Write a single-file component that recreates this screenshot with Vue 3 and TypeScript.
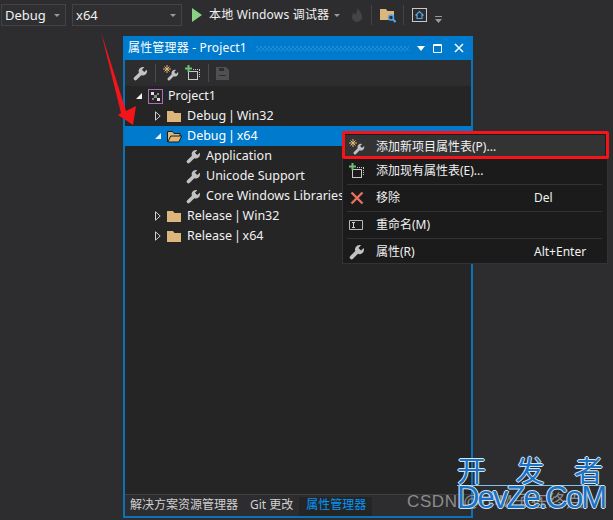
<script setup lang="ts">
interface Row { label: string; level: string; kind: 'project' | 'folder' | 'open' | 'sheet'; arrow: 'open' | 'closed' | 'none'; selected?: boolean }
const rows: Row[] = [
  { label: 'Project1', level: 'l0', kind: 'project', arrow: 'open' },
  { label: 'Debug | Win32', level: 'l1', kind: 'folder', arrow: 'closed' },
  { label: 'Debug | x64', level: 'l1', kind: 'open', arrow: 'open', selected: true },
  { label: 'Application', level: 'l2', kind: 'sheet', arrow: 'none' },
  { label: 'Unicode Support', level: 'l2', kind: 'sheet', arrow: 'none' },
  { label: 'Core Windows Libraries', level: 'l2', kind: 'sheet', arrow: 'none' },
  { label: 'Release | Win32', level: 'l1', kind: 'folder', arrow: 'closed' },
  { label: 'Release | x64', level: 'l1', kind: 'folder', arrow: 'closed' },
]
const wrench = 'M10.5 1a4.5 4.5 0 0 0-4.2 6.1L1.3 12A1.9 1.9 0 0 0 4 14.7l4.9-4.9A4.5 4.5 0 0 0 15 5.5a4.5 4.5 0 0 0-.3-1.6L12 6.5 9.5 4l2.6-2.7A4.5 4.5 0 0 0 10.5 1z'
</script>

<template>
  <div class="screen">
    <header class="topbar">
      <div class="combo debug"><span>Debug</span><i class="caret"></i></div>
      <div class="combo x64"><span>x64</span><i class="caret"></i></div>
      <svg class="play" width="10" height="14" viewBox="0 0 10 14"><path d="M0 0l10 7-10 7z" fill="#89d185" /></svg>
      <span class="runlabel">本地 Windows 调试器</span>
      <i class="caret runcaret"></i>
      <svg class="flame" width="12" height="16" viewBox="0 0 12 16"><path d="M6 0c1 3 5 5 5 10a5 5 0 0 1-10 0c0-2 1-4 2-5 0 2 1 2 1 3 1-2 3-4 2-8z" fill="#444446" /></svg>
      <i class="sep"></i>
      <svg class="ticon" width="16" height="16" viewBox="0 0 16 16">
        <path d="M0 2h6l1.500 2H14v9H0z" fill="#dcb67a" />
        <circle cx="11" cy="10.500" r="2.500" fill="#2d2d30" stroke="#4fa6e8" stroke-width="1.500" />
        <path d="M12.800 12.300l2.700 2.700" stroke="#4fa6e8" stroke-width="2" />
      </svg>
      <i class="sep"></i>
      <svg class="ticon" width="15" height="14" viewBox="0 0 15 14">
        <rect x=".5" y=".5" width="14" height="13" fill="none" stroke="#c8c8c8" />
        <path d="M3.500 7.500L7.500 3.500l4 4M5 6.500v4h5v-4" fill="none" stroke="#4fa6e8" stroke-width="1.200" />
      </svg>
      <svg class="more" width="7" height="7" viewBox="0 0 7 7"><path d="M0 0h7v1H0zM0 3h7L3.500 7z" fill="#9a9a9a" /></svg>
    </header>

    <section class="window">
      <div class="titlebar">
        <span class="title">属性管理器 - Project1</span>
        <i class="grip"></i>
        <svg width="8" height="5" viewBox="0 0 8 5"><path d="M0 0h8L4 5z" fill="#fff" /></svg>
        <svg class="max" width="10" height="9" viewBox="0 0 10 9"><path d="M.5.500h8v8h-8zM.5 1.500h8" fill="none" stroke="#fff" /></svg>
        <svg class="close" width="10" height="10" viewBox="0 0 10 10"><path d="M1 1l8 8M9 1L1 9" stroke="#fff" stroke-width="1.500" /></svg>
      </div>

      <div class="tools">
        <svg width="15" height="15" viewBox="0 0 16 16"><path :d="wrench" fill="#c2c2c2" /></svg>
        <i class="toolsep"></i>
        <svg width="16" height="16" viewBox="0 0 16 16">
          <path :d="wrench" fill="#c2c2c2" transform="translate(4 4) scale(.75)" />
          <path d="M4 0v8M0 4h8M1.500 1.500l5 5M6.500 1.500l-5 5" stroke="#e8b66e" stroke-width="1" />
        </svg>
        <svg class="addsheet" width="16" height="16" viewBox="0 0 16 16">
          <rect x="3.500" y="6.500" width="9" height="8" fill="none" stroke="#c8c8c8" />
          <path d="M8 4.500h7M14.500 5v8" stroke="#c8c8c8" stroke-dasharray="1 1" />
          <path d="M3.500 0v7M0 3.500h7" stroke="#6fbf73" stroke-width="2" />
        </svg>
        <i class="toolsep"></i>
        <svg width="13" height="13" viewBox="0 0 13 13"><path d="M0 0h10l3 3v10H0zM3 1v3h5V1zM3 8v1h7V8z" fill="#505052" fill-rule="evenodd" /></svg>
      </div>

      <div class="tree">
        <div v-for="row in rows" :key="row.label" class="row" :class="[row.level, { selected: row.selected }]">
          <span class="twisty">
            <svg v-if="row.arrow === 'open'" width="6" height="6" viewBox="0 0 6 6"><path d="M6 0v6H0z" fill="#f1f1f1" /></svg>
            <svg v-else-if="row.arrow === 'closed'" width="6" height="10" viewBox="0 0 6 10"><path d="M.5.800l4.700 4.200-4.700 4.200z" fill="none" stroke="#d0d0d0" /></svg>
          </span>
          <svg v-if="row.kind === 'project'" class="ricon" width="15" height="15" viewBox="0 0 15 15">
            <rect x=".5" y=".5" width="14" height="14" fill="#252526" stroke="#b06cb8" />
            <path d="M3 3h3v3H3zM9 9h3v3H9z" fill="#e0e0e0" /><path d="M6 6h3v3H6zM9 4h2v2H9zM4 9h2v2H4z" fill="#8a8a8a" />
          </svg>
          <svg v-else-if="row.kind === 'folder'" class="ricon" width="15" height="13" viewBox="0 0 15 13"><path d="M0 1h6l1.500 2H14v9H0z" fill="#dcb67a" /></svg>
          <svg v-else-if="row.kind === 'open'" class="ricon" width="15" height="13" viewBox="0 0 15 13">
            <path d="M.5 12V1.500h5l1.500 2h6V6" fill="#dcb67a" stroke="#1b1b1c" />
            <path d="M.8 12l3-6h11l-3 6z" fill="#dcb67a" stroke="#1b1b1c" />
          </svg>
          <svg v-else class="ricon" width="15" height="15" viewBox="0 0 16 16"><path :d="wrench" fill="#c2c2c2" /></svg>
          <span class="rowlabel">{{ row.label }}</span>
        </div>
      </div>

      <footer class="tabs">
        <span class="tab">解决方案资源管理器</span>
        <span class="tab">Git 更改</span>
        <span class="tab active">属性管理器</span>
      </footer>
    </section>

    <nav class="menu">
      <div class="mi hot">
        <svg width="16" height="16" viewBox="0 0 16 16">
          <path :d="wrench" fill="#c2c2c2" transform="translate(4 4) scale(.75)" />
          <path d="M4 0v8M0 4h8M1.500 1.500l5 5M6.500 1.500l-5 5" stroke="#e8b66e" stroke-width="1" />
        </svg>
        <span>添加新项目属性表(P)...</span>
      </div>
      <div class="mi">
        <svg width="16" height="16" viewBox="0 0 16 16">
          <rect x="3.500" y="6.500" width="9" height="8" fill="none" stroke="#c8c8c8" />
          <path d="M8 4.500h7M14.500 5v8" stroke="#c8c8c8" stroke-dasharray="1 1" />
          <path d="M3.500 0v7M0 3.500h7" stroke="#6fbf73" stroke-width="2" />
        </svg>
        <span>添加现有属性表(E)...</span>
      </div>
      <hr />
      <div class="mi">
        <svg width="16" height="16" viewBox="0 0 16 16"><path d="M2.500 2.500l11 11M13.500 2.500l-11 11" stroke="#e8705f" stroke-width="2.400" /></svg>
        <span>移除</span><kbd>Del</kbd>
      </div>
      <hr />
      <div class="mi">
        <svg width="16" height="16" viewBox="0 0 16 16"><path d="M.5 3.500h13v9H.5z" fill="none" stroke="#b8b8b8" /><path d="M3 5.500h3M3 10.500h3M4.500 5.500v5" stroke="#d0d0d0" /></svg>
        <span>重命名(M)</span>
      </div>
      <hr />
      <div class="mi">
        <svg width="16" height="16" viewBox="0 0 16 16"><path :d="wrench" fill="#c2c2c2" /></svg>
        <span>属性(R)</span><kbd>Alt+Enter</kbd>
      </div>
    </nav>
    <i class="redbox"></i>

    <svg class="arrow" width="40" height="100" viewBox="0 0 40 100">
      <path d="M1 1L26 80L36 75L33 94L18 84L21 82z" fill="#f5141a" />
    </svg>

    <div class="csdn">CSDN @小M子在终点</div>
    <div class="mark">
      <div class="markcn"><span>开</span><span>发</span><span>者</span></div>
      <div class="markline"></div>
      <div class="markde">DevZe.CoM</div>
    </div>
  </div>
</template>

<style>
html, body { margin: 0; background: #2d2d30; }
</style>

<style scoped>
.screen {
  position: relative;
  width: 613px;
  height: 520px;
  overflow: hidden;
  background: #2d2d30;
  color: #f1f1f1;
  font: 12px/16px "Noto Sans", "Noto Sans CJK SC", sans-serif;
}
i { display: block; }
.topbar { display: flex; align-items: center; height: 30px; padding-left: 1px; box-sizing: border-box; }
.combo {
  display: flex; align-items: center; justify-content: space-between;
  height: 22px; box-sizing: border-box; border: 1px solid #434346; background: #2f2f32;
  padding: 0 4px 0 3px; font-size: 13px;
}
.debug { width: 65px; margin-right: 6px; }
.x64 { width: 110px; margin-right: 10px; }
.caret { width: 0; height: 0; border: 3px solid transparent; border-top: 3px solid #999; border-bottom: 0; margin-right: 1px; }
.play { margin-right: 7px; }
.runlabel { font-size: 12px; margin-right: 5px; white-space: nowrap; letter-spacing: .2px; }
.flame { margin-left: 10px; margin-right: 8px; }
.sep { width: 1px; height: 20px; background: #434346; }
.ticon { margin: 0 7px 0 8px; flex: none; }
.more { margin: 8px 0 0 1px; }

.window {
  position: relative;
  display: flex; flex-direction: column;
  width: 350px; height: 482px;
  margin: 6px 0 0 123px;
  box-sizing: border-box;
  border: 2px solid #0a72b8;
  border-top: 0;
  background: #252526;
}
.titlebar { display: flex; align-items: center; height: 24px; margin: 0 -2px; padding: 0 9px 0 5px; background: #007acc; color: #fff; }
.title { white-space: nowrap; letter-spacing: .17px; }
.grip {
  flex: 1; height: 5px; margin: 0 8px 0 9px;
  background-image: radial-gradient(circle at 1px 1px, #3f9fdc .6px, transparent .8px), radial-gradient(circle at 1px 1px, #3f9fdc .6px, transparent .8px);
  background-size: 4px 4px;
  background-position: 0 0, 2px 2px;
}
.max { margin: 0 8px 0 8px; }
.close { margin-left: 3px; }
.tools { display: flex; align-items: center; height: 26px; padding-left: 8px; background: #2d2d30; }
.tools svg { margin-right: 6px; }
.toolsep { width: 1px; height: 18px; background: #4a4a4c; margin: 0 7px 0 1px; }
.tree { flex: 1; overflow: hidden; }
.row { display: flex; align-items: center; height: 20px; white-space: nowrap; font-size: 12.500px; }
.row.selected { background: #007acc; color: #fff; }
.l0 { padding-left: 11px; }
.l1 { padding-left: 30px; word-spacing: -1.500px; }
.l2 { padding-left: 61px; }
.l2 .twisty { display: none; }
.twisty { display: flex; align-items: center; width: 12px; flex: none; }
.ricon { flex: none; margin-right: 5px; }
.tabs { display: flex; align-items: flex-end; height: 22px; background: #2d2d30; box-sizing: border-box; border-top: 1px solid #3f3f46; padding-left: 0; }
.tab { padding: 0 6px 3px; white-space: nowrap; color: #d0d0d0; }
.tab:first-child { margin-left: -1px; }
.tab.active { color: #0097fb; background: #252526; padding-left: 7px; }

.menu {
  position: absolute; left: 342px; top: 132px; width: 266px; height: 132px;
  box-sizing: border-box; padding: 2px 2px;
  background: #1b1b1c; border: 1px solid #333337;
}
.mi { display: flex; align-items: center; height: 23px; padding-left: 4px; position: relative; }
.mi svg { flex: none; margin-right: 11px; }
.mi.hot { background: #333334; margin-bottom: 1px; }
.menu hr { height: 1px; border: 0; margin: 1.500px 3px 1.500px 2px; background: #333337; }
.mi kbd { position: absolute; left: 189px; font: inherit; }
.redbox { position: absolute; left: 342px; top: 131px; width: 267px; height: 28px; box-sizing: border-box; border: 3px solid #f5141a; border-radius: 2px; }
.arrow { position: absolute; left: 100px; top: 31px; }
.csdn { position: absolute; left: 407px; top: 491px; font: 17px/22px "Liberation Sans", "Noto Sans CJK SC", sans-serif; color: #8c8c8c; white-space: nowrap; letter-spacing: .6px; }
.mark { position: absolute; left: 457px; top: 453px; width: 146px; }
.markcn {
  display: flex; justify-content: space-between; height: 32px;
  font: 29px/32px "Noto Sans CJK SC", sans-serif; color: #1a72c4;
  text-shadow: 1px 0 #d8e6f2, -1px 0 #d8e6f2, 0 1px #d8e6f2, 0 -1px #d8e6f2;
}
.markline { height: 1px; background: #7cc4ea; }
.markde {
  margin-top: -1px;
  font: 31px/26px "Liberation Sans", sans-serif; letter-spacing: -1.900px; color: #1a72c4; white-space: nowrap;
  text-shadow: 1px 0 #d8e6f2, -1px 0 #d8e6f2, 0 1px #d8e6f2, 0 -1px #d8e6f2;
}
</style>
